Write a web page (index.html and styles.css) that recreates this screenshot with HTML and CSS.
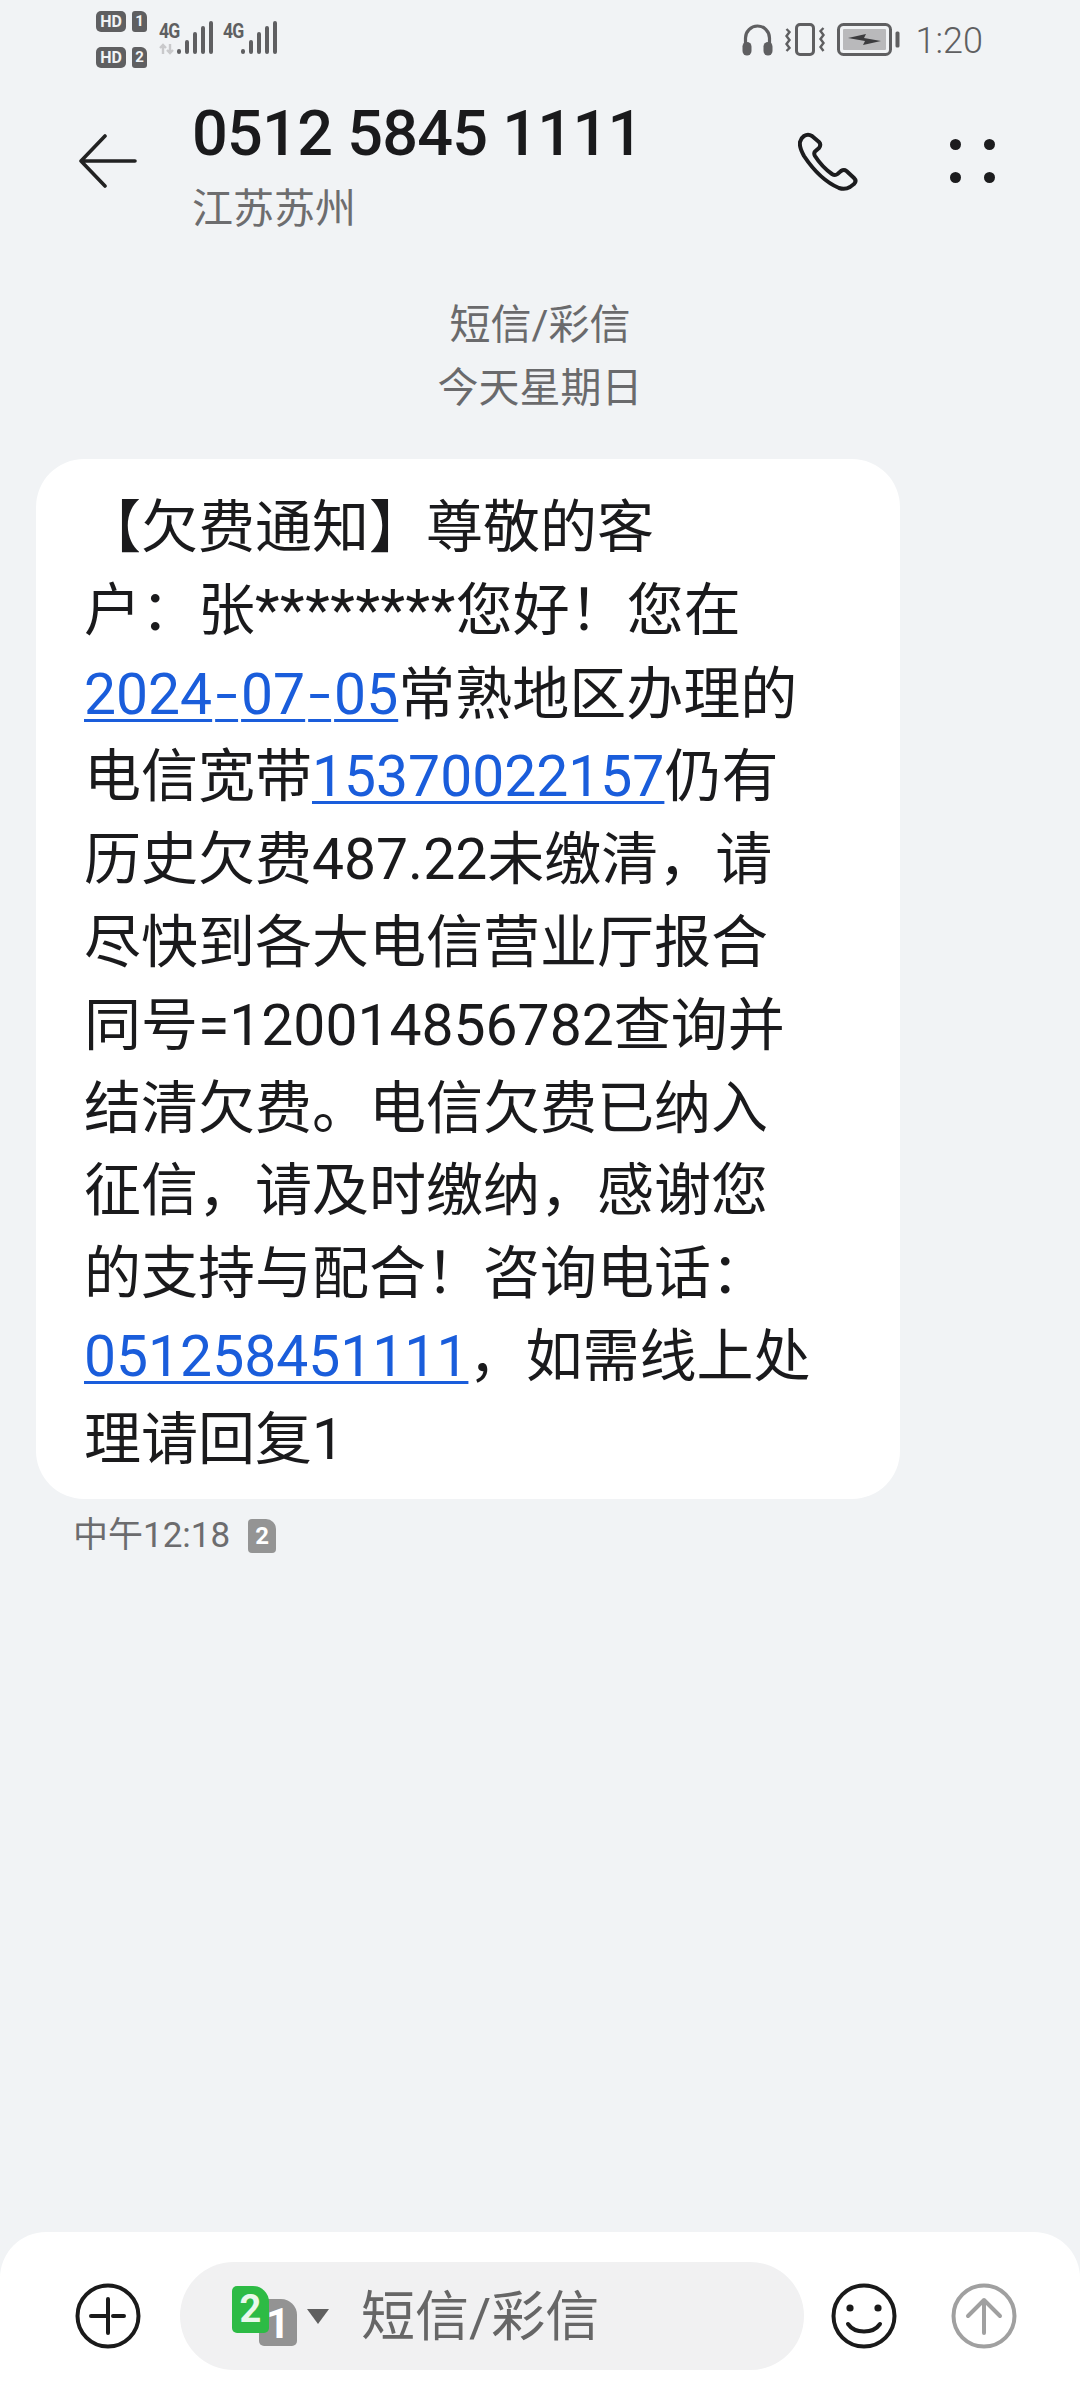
FILE: index.html
```html
<!DOCTYPE html>
<html lang="zh-CN">
<head>
<meta charset="utf-8">
<title>短信</title>
<link rel="stylesheet" href="styles.css">
</head>
<body>
<div class="screen">
  <div class="status">
    <div class="status-left">
      <div class="sims">
        <div class="sim-row"><span class="hd">HD</span><span class="simno">1</span></div>
        <div class="sim-row"><span class="hd">HD</span><span class="simno">2</span></div>
      </div>
      <div class="net">
        <span class="net-g">4G</span>
        <svg class="arrows" viewBox="0 0 16 10"><path d="M4 10V1M1 4l3-3 3 3M11 0v9M8 6l3 3 3-3" fill="none" stroke="#c9c9cb" stroke-width="2.4"/></svg>
        <svg class="bars" viewBox="0 0 36 34"><g fill="none" stroke="#5f5f61" stroke-width="4" stroke-linecap="round"><path d="M2 31v-1M10 31V21M18 31V13M26 31V7M34 31V2"/></g></svg>
      </div>
      <div class="net">
        <span class="net-g">4G</span>
        <svg class="bars" viewBox="0 0 36 34"><g fill="none" stroke="#5f5f61" stroke-width="4" stroke-linecap="round"><path d="M2 31v-1M10 31V21M18 31V13M26 31V7M34 31V2"/></g></svg>
      </div>
    </div>
    <div class="status-right">
      <svg class="st-head" viewBox="0 0 31 33"><path d="M3.500 22v-7a12 12 0 0 1 24 0v7" fill="none" stroke="#5f5f61" stroke-width="3.2"/><rect x="0.500" y="19" width="9" height="13.500" rx="4.500" fill="#5f5f61"/><rect x="21.500" y="19" width="9" height="13.500" rx="4.500" fill="#5f5f61"/></svg>
      <svg class="st-vib" viewBox="0 0 40 33"><rect x="11.500" y="1.500" width="17" height="30" rx="3.500" fill="none" stroke="#5f5f61" stroke-width="3"/><path d="M1.500 6l3 3-3 4 3 4-3 4 3 4-3 3M38.500 5l-3 3 3 4-3 4 3 4-3 4 3 4" fill="none" stroke="#5f5f61" stroke-width="2.400"/></svg>
      <svg class="st-bat" viewBox="0 0 63 33"><rect x="1.500" y="1.500" width="52" height="30" rx="5" fill="none" stroke="#5f5f61" stroke-width="3"/><rect x="6" y="6" width="43" height="21" rx="1" fill="#b9b9bb"/><rect x="58.500" y="8.500" width="4" height="16" rx="1.500" fill="#5f5f61"/><path d="M11 15l18-4-2 4 17 3-18 4 2-4z" fill="#3c3c3e"/></svg>
      <span class="clock">1:20</span>
    </div>
  </div>

  <header class="top">
    <svg class="back" viewBox="0 0 58 54"><path d="M26 2L2 27l24 25M2 27h54" fill="none" stroke="#222" stroke-width="3.600" stroke-linecap="round" stroke-linejoin="round"/></svg>
    <div class="who">
      <div class="num">0512 5845 1111</div>
      <div class="loc">江苏苏州</div>
    </div>
    <svg class="phone" viewBox="0 0 60 60"><path d="M6 4Q10 1.500 14 4L21 10Q23.500 12.500 21 16L17 19.500Q15.500 21.500 17 24Q24 35 34 42Q37 44 39.500 42L43 39Q46 37 48.500 39L56 46Q59 49 56 52L52 55Q47 58 41 56Q22 48 6 24Q1 15 2 10Q3 6 6 4Z" fill="none" stroke="#1c1c1e" stroke-width="4" stroke-linejoin="round"/></svg>
    <div class="dots"><i></i><i></i><i></i><i></i></div>
  </header>

  <div class="stamp">
    <div>短信/彩信</div>
    <div>今天星期日</div>
  </div>

  <main class="thread">
    <div class="bubble">【欠费通知】尊敬的客<br>户：张<span class="stars">********</span>您好！您在<br><a>2024<span class="hy">-</span>07<span class="hy">-</span>05</a>常熟地区办理的<br>电信宽带<a>15370022157</a>仍有<br>历史欠费487.22未缴清，请<br>尽快到各大电信营业厅报合<br>同号=120014856782查询并<br>结清欠费。电信欠费已纳入<br>征信，请及时缴纳，感谢您<br>的支持与配合！咨询电话：<br><a>051258451111</a>，如需线上处<br>理请回复1</div>
    <div class="meta"><span>中午12:18</span><span class="mini-sim">2</span></div>
  </main>

  <footer class="composer">
    <svg class="round-ic" viewBox="0 0 66 66"><circle cx="33" cy="33" r="30.500" fill="none" stroke="#1a1a1a" stroke-width="4"/><path d="M33 16v34M16 33h17M38 33h11" fill="none" stroke="#1a1a1a" stroke-width="4" stroke-linecap="round"/></svg>
    <div class="field">
      <div class="sim-pick">
        <span class="sim-back">1</span>
        <span class="sim-front">2</span>
      </div>
      <span class="caret"></span>
      <span class="hint">短信/彩信</span>
    </div>
    <svg class="round-ic smile" viewBox="0 0 66 66"><circle cx="33" cy="33" r="30.500" fill="none" stroke="#1a1a1a" stroke-width="4"/><circle cx="19" cy="25" r="3.600" fill="#1a1a1a"/><circle cx="47" cy="25" r="3.600" fill="#1a1a1a"/><path d="M17 41c7 10 25 10 32 0" fill="none" stroke="#1a1a1a" stroke-width="4" stroke-linecap="round"/></svg>
    <svg class="round-ic send" viewBox="0 0 66 66"><circle cx="33" cy="33" r="30.500" fill="none" stroke="#a0a0a0" stroke-width="4"/><path d="M33 17v33M17 33l16-16 16 16" fill="none" stroke="#a0a0a0" stroke-width="4" stroke-linecap="round" stroke-linejoin="round"/></svg>
  </footer>
</div>
</body>
</html>
```
FILE: styles.css
```css
* { box-sizing: border-box; }
html, body { margin: 0; padding: 0; }
body { font-family: Roboto, "Noto Sans CJK SC", sans-serif; background: #f1f3f5; }
.screen { width: 1080px; height: 2400px; display: flex; flex-direction: column; background: #f1f3f5; overflow: hidden; }

.status { height: 80px; display: flex; justify-content: space-between; padding: 0 97px 0 96px; color: #5f5f61; flex: none; }
.status-left { display: flex; gap: 12px; padding-top: 11px; }
.sims { display: flex; flex-direction: column; gap: 15px; width: 51px; }
.sim-row { display: flex; gap: 6px; height: 21px; }
.hd { width: 30px; height: 21px; border-radius: 5px; background: #5f5f61; color: #f1f3f5; font: 700 16px/21px Roboto, sans-serif; text-align: center; }
.simno { width: 15px; height: 21px; border-radius: 3px 6px 3px 3px; background: #5f5f61; color: #f1f3f5; font: 700 15px/21px Roboto, sans-serif; text-align: center; }
.net { position: relative; width: 52px; height: 46px; }
.net-g { position: absolute; left: 0; top: 9px; font: 700 20px/22px Roboto, sans-serif; letter-spacing: -1px; transform: scaleX(.88); transform-origin: left; }
.arrows { position: absolute; left: 0; top: 32px; width: 16px; height: 12px; }
.bars { position: absolute; left: 18px; top: 10px; width: 36px; height: 34px; }

.status-right { display: flex; align-items: center; height: 78px; }
.st-head { width: 31px; height: 33px; margin-right: 12px; }
.st-vib { width: 40px; height: 33px; margin-right: 12px; }
.st-bat { width: 63px; height: 33px; margin-right: 16px; }
.clock { font-size: 36px; font-weight: 300; color: #5f5f61; line-height: 40px; margin-top: 4px; }

.top { height: 160px; display: flex; flex: none; align-items: flex-start; padding-left: 79px; }
.back { width: 58px; height: 54px; margin-top: 54px; flex: none; }
.who { margin-left: 55px; width: 606px; }
.num { font-size: 63px; font-weight: 500; line-height: 70px; color: #1a1a1c; margin-top: 19px; letter-spacing: -0.75px; white-space: nowrap; }
.loc { font-size: 41px; line-height: 54px; color: #6d6d6f; margin-top: 13px; }
.phone { width: 60px; height: 60px; margin-top: 52px; flex: none; }
.dots { width: 45px; display: grid; grid-template-columns: 11px 11px; justify-content: space-between; row-gap: 22px; margin-left: 92px; margin-top: 59px; }
.dots i { width: 11px; height: 11px; border-radius: 50%; background: #1c1c1e; }

.stamp { flex: none; margin-top: 54px; text-align: center; color: #6a6a6c; font-size: 41px; line-height: 63px; }

.thread { flex: 1; padding: 0 0 0 36px; margin-top: 39px; }
.bubble { width: 864px; height: 1040px; padding: 28px 0 0 48px; background: #fff; border-radius: 48px; color: #1a1a1c; font-size: 57px; line-height: 82.8px; white-space: nowrap; }
.bubble a { color: #1a5ddb; text-decoration: underline; text-decoration-thickness: 3px; text-underline-offset: 5px; }
.stars { letter-spacing: .55px; }
.hy { font-size: 80px; font-weight: 300; vertical-align: -7px; padding: 0 3px; }
.meta { display: flex; align-items: center; gap: 18px; margin: 14px 0 0 37px; font-size: 35px; line-height: 46px; color: #6c6c6e; }
.mini-sim { width: 28px; height: 34px; border-radius: 4px 10px 4px 4px; background: #949494; color: #fff; font: 700 24px/34px Roboto, sans-serif; text-align: center; }

.composer { flex: none; height: 168px; background: #fff; border-radius: 46px 46px 0 0; display: flex; padding: 30px 0 0 75px; }
.round-ic { width: 66px; height: 66px; margin-top: 21px; flex: none; }
.field { width: 624px; height: 108px; margin-left: 39px; padding-left: 52px; border-radius: 54px; background: #f1f1f2; display: flex; align-items: center; flex: none; }
.sim-pick { position: relative; width: 65px; height: 60px; flex: none; }
.sim-front, .sim-back { position: absolute; border-radius: 5px 16px 5px 5px; color: #fff; font-weight: 700; text-align: center; }
.sim-front { left: 0; top: 0; width: 37px; height: 47px; background: #2dbb45; color: #e9f8eb; font-size: 38px; line-height: 47px; z-index: 1; }
.sim-back { left: 27px; top: 13px; width: 38px; height: 47px; background: #939393; font-size: 42px; line-height: 50px; }
.caret { width: 0; height: 0; margin-left: 10px; border-left: 11px solid transparent; border-right: 11px solid transparent; border-top: 15px solid #5f5f5f; flex: none; }
.hint { margin-left: 32px; font-size: 54px; line-height: 70px; color: #666; white-space: nowrap; margin-top: 4px; }
.smile { margin-left: 27px; }
.send { margin-left: 54px; }
```
